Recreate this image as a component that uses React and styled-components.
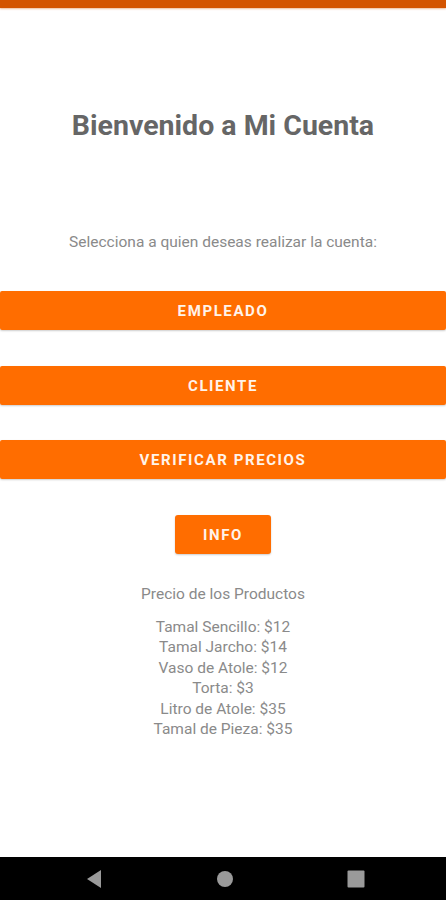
import React from 'react'
import styled, { createGlobalStyle } from 'styled-components'

const GlobalStyle = createGlobalStyle`
    html, body {
        margin: 0;
        padding: 0;
        background: #ffffff;
        font-family: Roboto, "Noto Sans", sans-serif;
    }
`

const Screen = styled.div`
    display: flex;
    flex-direction: column;
    height: 900px;
    overflow: hidden;
`

const TopBar = styled.div`
    height: 8px;
    background: #d35400;
    box-shadow: 0 1px 2px rgba(211, 84, 0, 0.4);
`

const Content = styled.main`
    flex: 1;
    display: flex;
    flex-direction: column;
    align-items: center;
`

const Title = styled.h1`
    margin: 101px 0 0;
    font-size: 28.5px;
    line-height: 34px;
    font-weight: 700;
    color: #666666;
`

const Subtitle = styled.p`
    margin: 89px 0 0;
    font-size: 15.5px;
    line-height: 20px;
    color: #8a8a8a;
`

const Button = styled.button`
    width: ${(p) => (p.$small ? '96px' : '100%')};
    height: 39px;
    margin-top: ${(p) => p.$top}px;
    border: none;
    border-radius: ${(p) => (p.$small ? '3px' : '2px')};
    background: #ff6d00;
    color: #fff3ea;
    font-family: Roboto, "Noto Sans", sans-serif;
    font-size: 15px;
    font-weight: 700;
    letter-spacing: 1.6px;
    box-shadow: 0 1px 2px rgba(0, 0, 0, 0.2);
`

const PriceHeading = styled.p`
    margin: 30px 0 0;
    font-size: 15.5px;
    line-height: 20px;
    color: #8a8a8a;
`

const PriceList = styled.ul`
    margin: 13px 0 0;
    padding: 0;
    list-style: none;
    text-align: center;
`

const PriceItem = styled.li`
    font-size: 15.5px;
    line-height: 20.4px;
    color: #8a8a8a;
`

const NavBar = styled.nav`
    height: 43px;
    background: #000000;
    display: grid;
    grid-template-columns: 1fr 1fr 1fr;
    align-items: center;
    justify-items: center;
    padding: 0 25px 0 29px;
`

const prices = [
    'Tamal Sencillo: $12',
    'Tamal Jarcho: $14',
    'Vaso de Atole: $12',
    'Torta: $3',
    'Litro de Atole: $35',
    'Tamal de Pieza: $35',
]

const App = () => {
    return (
        <Screen>
            <GlobalStyle />
            <TopBar />
            <Content>
                <Title>Bienvenido a Mi Cuenta</Title>
                <Subtitle>Selecciona a quien deseas realizar la cuenta:</Subtitle>
                <Button $top={39}>EMPLEADO</Button>
                <Button $top={36}>CLIENTE</Button>
                <Button $top={35}>VERIFICAR PRECIOS</Button>
                <Button $small $top={36}>INFO</Button>
                <PriceHeading>Precio de los Productos</PriceHeading>
                <PriceList>
                    {prices.map((p) => (
                        <PriceItem key={p}>{p}</PriceItem>
                    ))}
                </PriceList>
            </Content>
            <NavBar>
                <svg width="18" height="20" viewBox="0 0 18 20">
                    <path d="M16 1 L2 10 L16 19 Z" fill="#9a9a9a" />
                </svg>
                <svg width="18" height="18" viewBox="0 0 18 18">
                    <circle cx="9" cy="9" r="8" fill="#9a9a9a" />
                </svg>
                <svg width="18" height="18" viewBox="0 0 18 18">
                    <rect x="0.5" y="0.5" width="17" height="17" rx="1" fill="#9a9a9a" />
                </svg>
            </NavBar>
        </Screen>
    )
}

export default App
